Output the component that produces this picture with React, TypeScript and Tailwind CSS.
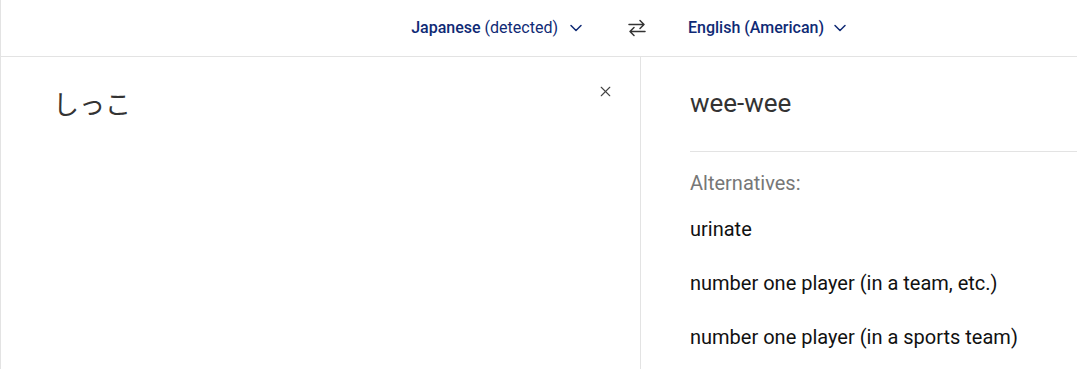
import { ChevronDown, X } from "lucide-react";

const alternatives = [
  "urinate",
  "number one player (in a team, etc.)",
  "number one player (in a sports team)",
];

function SwapIcon() {
  return (
    <svg viewBox="0 0 20 20" fill="none" stroke="currentColor" strokeWidth="1.5" className="h-5 w-5 text-[#333]">
      <path d="M2 6.5h15M13 2.5l4 4-4 4" strokeLinecap="round" strokeLinejoin="round" />
      <path d="M18 13.5H3M7 9.5l-4 4 4 4" strokeLinecap="round" strokeLinejoin="round" />
    </svg>
  );
}

export default function App() {
  return (
    <div
      className="h-[369px] w-[1077px] overflow-hidden border-l border-[#e3e3e3] bg-white"
      style={{ fontFamily: "Roboto, 'Noto Sans CJK JP', sans-serif" }}
    >
      {/* Idiomas */}
      <header className="flex h-[57px] items-center border-b border-[#e3e3e3] text-[16px] text-[#0f2a75]">
        <div className="flex w-[619px] items-center justify-end pr-[34px]">
          <span className="font-medium">Japanese</span>
          <span className="ml-1">(detected)</span>
          <ChevronDown className="ml-[8px] h-5 w-5" strokeWidth={1.8} />
        </div>
        <div className="flex w-[34px] justify-center">
          <SwapIcon />
        </div>
        <div className="flex items-center pl-[34px]">
          <span className="font-medium">English (American)</span>
          <ChevronDown className="ml-[6px] h-5 w-5" strokeWidth={1.8} />
        </div>
      </header>

      <div className="flex h-[312px]">
        {/* Origen */}
        <div className="relative w-[640px] border-r border-[#e3e3e3] pl-[52px] pt-[28px]">
          <p className="text-[26px] leading-[40px] text-[#333]">しっこ</p>
          <button className="absolute right-[26px] top-[26px] text-[#444]">
            <X className="h-[17px] w-[17px]" strokeWidth={1.6} />
          </button>
        </div>

        {/* Traducción */}
        <div className="flex-1 pl-[49px] pt-[27px]">
          <p className="text-[26px] leading-[38px] text-[#333]">wee-wee</p>
          <div className="mt-[29px] border-t border-[#e3e3e3] pt-[17px]">
            <p className="text-[20px] leading-[28px] text-[#777]">Alternatives:</p>
            <ul className="mt-[18px] flex flex-col gap-[26px]">
              {alternatives.map((a) => (
                <li key={a} className="text-[20px] leading-[28px] text-[#111]">
                  {a}
                </li>
              ))}
            </ul>
          </div>
        </div>
      </div>
    </div>
  );
}
